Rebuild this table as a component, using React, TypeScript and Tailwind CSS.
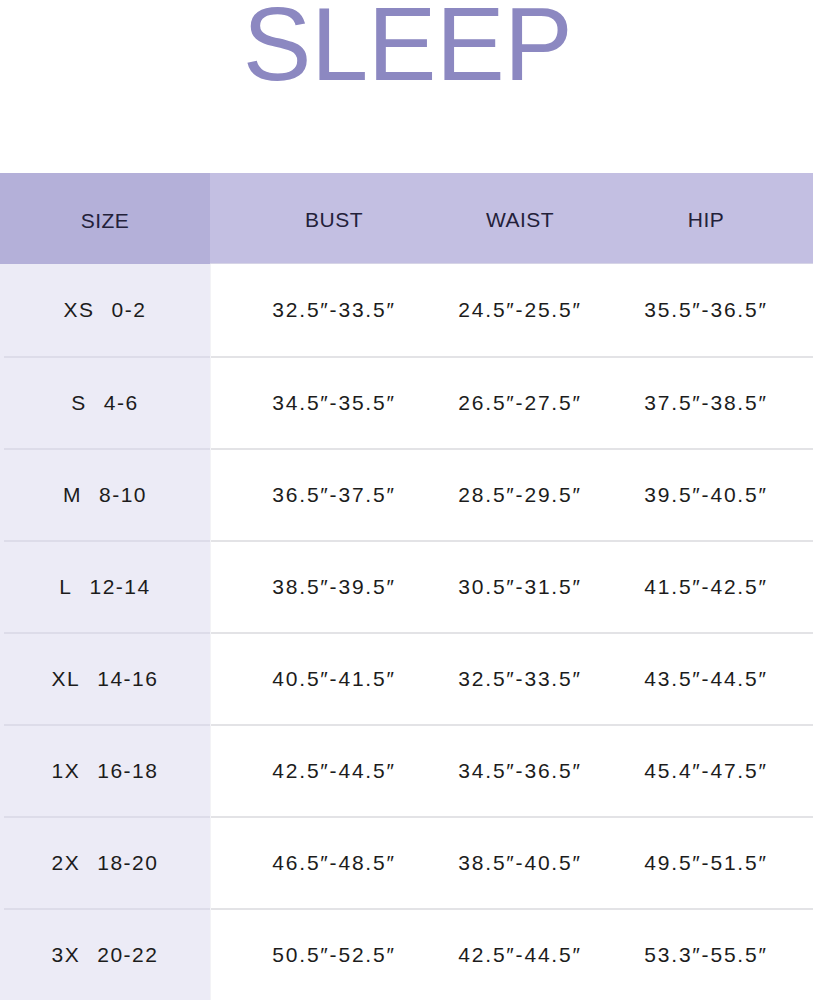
const rows = [
  { size: "XS", range: "0-2", bust: "32.5″-33.5″", waist: "24.5″-25.5″", hip: "35.5″-36.5″" },
  { size: "S", range: "4-6", bust: "34.5″-35.5″", waist: "26.5″-27.5″", hip: "37.5″-38.5″" },
  { size: "M", range: "8-10", bust: "36.5″-37.5″", waist: "28.5″-29.5″", hip: "39.5″-40.5″" },
  { size: "L", range: "12-14", bust: "38.5″-39.5″", waist: "30.5″-31.5″", hip: "41.5″-42.5″" },
  { size: "XL", range: "14-16", bust: "40.5″-41.5″", waist: "32.5″-33.5″", hip: "43.5″-44.5″" },
  { size: "1X", range: "16-18", bust: "42.5″-44.5″", waist: "34.5″-36.5″", hip: "45.4″-47.5″" },
  { size: "2X", range: "18-20", bust: "46.5″-48.5″", waist: "38.5″-40.5″", hip: "49.5″-51.5″" },
  { size: "3X", range: "20-22", bust: "50.5″-52.5″", waist: "42.5″-44.5″", hip: "53.3″-55.5″" },
]

export default function App() {
  return (
    <div className="w-[813px] h-[1000px] overflow-hidden bg-white font-['Liberation_Sans',Arial,sans-serif]">
      {/* Title */}
      <div className="h-[173px] flex justify-center">
        <h1 className="text-[103px] leading-[88px] tracking-[-0.5px] text-[#8c88c1] pl-[2px] pt-[1px]">SLEEP</h1>
      </div>

      {/* Header */}
      <div className="flex h-[91px] text-[21px] tracking-[0.5px] text-[#23213a]">
        <div className="w-[210px] bg-[#b4b0d9] flex items-center justify-center pt-[4px]">SIZE</div>
        <div className="flex-1 bg-[#c3bfe2] flex items-center pl-[31px] pt-[4px] border-b border-[#d6d4e6]">
          <div className="w-[186px] text-center">BUST</div>
          <div className="w-[186px] text-center">WAIST</div>
          <div className="w-[186px] text-center">HIP</div>
        </div>
      </div>

      {/* Rows */}
      {rows.map((r, i) => (
        <div key={r.size} className="flex h-[92px] text-[21px] text-[#1c1c1c]">
          <div className="w-[210px] bg-[#ecebf6] flex flex-col">
            {i > 0 && <div className="h-[2px] ml-[4px] bg-[#dddce9]" />}
            <div className="flex-1 flex items-center justify-center gap-[17px] tracking-[1.5px]">
              <span>{r.size}</span>
              <span>{r.range}</span>
            </div>
          </div>
          <div className="flex-1 flex flex-col border-l border-[#f3f3f6]">
            {i > 0 && <div className="h-[2px] bg-[#e3e3e6]" />}
            <div className="flex-1 flex items-center pl-[30px] tracking-[1.8px]">
              <div className="w-[186px] text-center">{r.bust}</div>
              <div className="w-[186px] text-center">{r.waist}</div>
              <div className="w-[186px] text-center">{r.hip}</div>
            </div>
          </div>
        </div>
      ))}
    </div>
  )
}
